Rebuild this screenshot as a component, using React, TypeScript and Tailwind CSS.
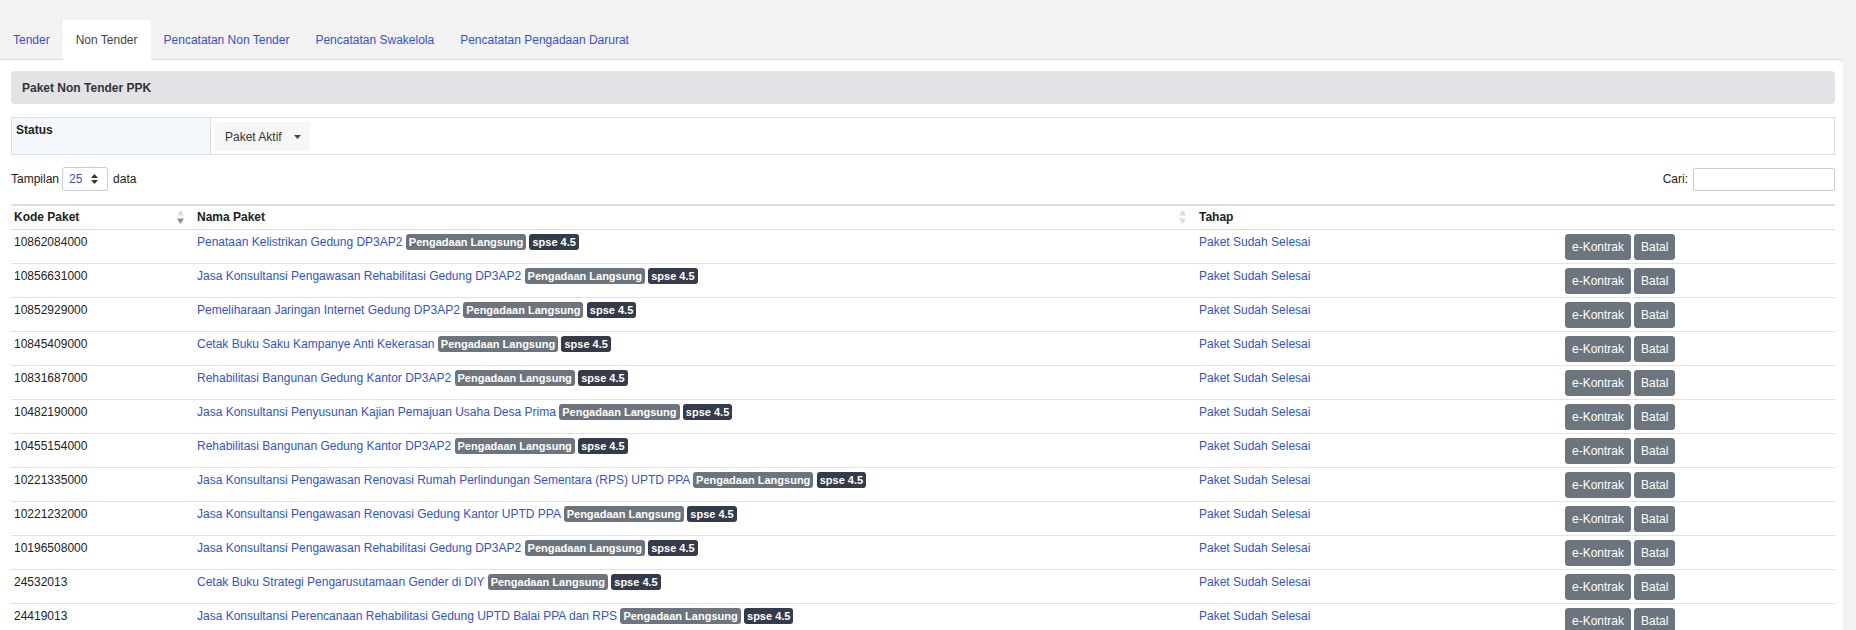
import React from "react";

const rows: [string, string][] = [
  ["10862084000", "Penataan Kelistrikan Gedung DP3AP2"],
  ["10856631000", "Jasa Konsultansi Pengawasan Rehabilitasi Gedung DP3AP2"],
  ["10852929000", "Pemeliharaan Jaringan Internet Gedung DP3AP2"],
  ["10845409000", "Cetak Buku Saku Kampanye Anti Kekerasan"],
  ["10831687000", "Rehabilitasi Bangunan Gedung Kantor DP3AP2"],
  ["10482190000", "Jasa Konsultansi Penyusunan Kajian Pemajuan Usaha Desa Prima"],
  ["10455154000", "Rehabilitasi Bangunan Gedung Kantor DP3AP2"],
  ["10221335000", "Jasa Konsultansi Pengawasan Renovasi Rumah Perlindungan Sementara (RPS) UPTD PPA"],
  ["10221232000", "Jasa Konsultansi Pengawasan Renovasi Gedung Kantor UPTD PPA"],
  ["10196508000", "Jasa Konsultansi Pengawasan Rehabilitasi Gedung DP3AP2"],
  ["24532013", "Cetak Buku Strategi Pengarusutamaan Gender di DIY"],
  ["24419013", "Jasa Konsultansi Perencanaan Rehabilitasi Gedung UPTD Balai PPA dan RPS"],
];

const tabs = ["Tender", "Non Tender", "Pencatatan Non Tender", "Pencatatan Swakelola", "Pencatatan Pengadaan Darurat"];

function SortIcon({ active }: { active?: boolean }) {
  return (
    <svg width="7" height="16" viewBox="0 0 7 16" className="shrink-0">
      <path d="M3.5 1 L7 6.5 L0 6.5 Z" fill="#dcdcdc" />
      <path d="M0 9.5 L7 9.5 L3.5 15 Z" fill={active ? "#8e8e8e" : "#dcdcdc"} />
    </svg>
  );
}

export default function App() {
  return (
    <div className="h-[630px] overflow-hidden bg-[#f2f2f2] font-['Liberation_Sans',Arial,sans-serif] text-[12px] text-[#222]">
      {/* tabs */}
      <div className="flex pt-[20px]">
        {tabs.map((t) =>
          t === "Non Tender" ? (
            <div key={t} className="relative z-10 -mb-px flex h-[40px] items-center bg-white px-[13px] text-[#444]">
              {t}
            </div>
          ) : (
            <div key={t} className="flex h-[39px] items-center px-[13px] text-[#3352cf]">
              {t}
            </div>
          )
        )}
      </div>

      <div className="mr-[13px] rounded-tr-[6px] border-t border-[#dcdcdc] bg-white pl-[11px] pr-[8px] pt-[11px]">
        <div className="flex h-[33px] items-center rounded-[4px] bg-[#e2e3e6] pl-[11px] font-bold text-[#333]">
          Paket Non Tender PPK
        </div>

        <div className="mt-[13px] flex h-[38px] border border-[#dddddd]">
          <div className="w-[199px] border-r border-[#dddddd] bg-[#f4f8fc] pl-[4px] pt-[3px] font-bold">Status</div>
          <div className="p-[4px]">
            <div className="flex h-[29px] items-center gap-[12px] rounded-[3px] bg-[#f6f6f7] pl-[10px] pr-[9px] text-[#333]">
              <span>Paket Aktif</span>
              <svg width="7" height="4" viewBox="0 0 7 4">
                <path d="M0 0 L7 0 L3.5 4 Z" fill="#444" />
              </svg>
            </div>
          </div>
        </div>

        <div className="mt-[12px] flex h-[24px] items-center justify-between">
          <div className="flex items-center">
            <span>Tampilan</span>
            <div className="ml-[3px] flex h-[24px] w-[46px] items-center justify-between rounded-[3px] border border-[#cccccc] pl-[6px] pr-[9px] text-[#3352cf]">
              <span>25</span>
              <svg width="7" height="10" viewBox="0 0 7 10">
                <path d="M3.5 0 L7 4 L0 4 Z" fill="#333" />
                <path d="M0 6 L7 6 L3.5 10 Z" fill="#333" />
              </svg>
            </div>
            <span className="ml-[5px]">data</span>
          </div>
          <div className="flex items-center">
            <span>Cari:</span>
            <div className="ml-[5px] h-[23px] w-[142px] rounded-[2px] border border-[#cccccc]" />
          </div>
        </div>

        <table className="mt-[13px] w-full border-collapse border-t-2 border-[#dddddd]">
          <thead>
            <tr className="border-b border-[#dddddd]">
              <th className="h-[24px] w-[176px] p-0 pl-[3px] pr-[3px] text-left font-bold">
                <div className="flex items-center justify-between">
                  <span>Kode Paket</span>
                  <SortIcon active />
                </div>
              </th>
              <th className="w-[1002px] p-0 pl-[10px] pr-[3px] text-left font-bold">
                <div className="flex items-center justify-between">
                  <span>Nama Paket</span>
                  <SortIcon />
                </div>
              </th>
              <th className="w-[366px] p-0 pl-[10px] text-left font-bold">Tahap</th>
              <th className="w-[280px] p-0" />
            </tr>
          </thead>
          <tbody>
            {rows.map(([kode, nama]) => (
              <tr key={kode + nama} className="border-b border-[#dee2e6]">
                <td className="p-0 pb-[3px] pl-[3px] pt-[4px] align-top leading-[16px]">{kode}</td>
                <td className="p-0 pb-[3px] pl-[10px] pt-[4px] align-top leading-[16px]">
                  <span className="text-[#3352cf]">{nama}</span>{" "}
                  <span className="inline-block rounded-[3px] bg-[#6c757d] px-[3px] text-[11px] font-bold leading-[16px] text-white">
                    Pengadaan Langsung
                  </span>{" "}
                  <span className="inline-block rounded-[3px] bg-[#343b4a] px-[3px] text-[11px] font-bold leading-[16px] text-white">
                    spse 4.5
                  </span>
                </td>
                <td className="p-0 pb-[3px] pl-[10px] pt-[4px] align-top leading-[16px] text-[#3352cf]">Paket Sudah Selesai</td>
                <td className="p-0 pb-[3px] pl-[10px] pt-[4px] align-top">
                  <div className="flex gap-[3px]">
                    <span className="flex h-[26px] items-center rounded-[3px] border border-[#6c757d] bg-[#6c757d] px-[6px] text-white">
                      e-Kontrak
                    </span>
                    <span className="flex h-[26px] items-center rounded-[3px] border border-[#6c757d] bg-[#6c757d] px-[6px] text-white">
                      Batal
                    </span>
                  </div>
                </td>
              </tr>
            ))}
          </tbody>
        </table>
      </div>
    </div>
  );
}
